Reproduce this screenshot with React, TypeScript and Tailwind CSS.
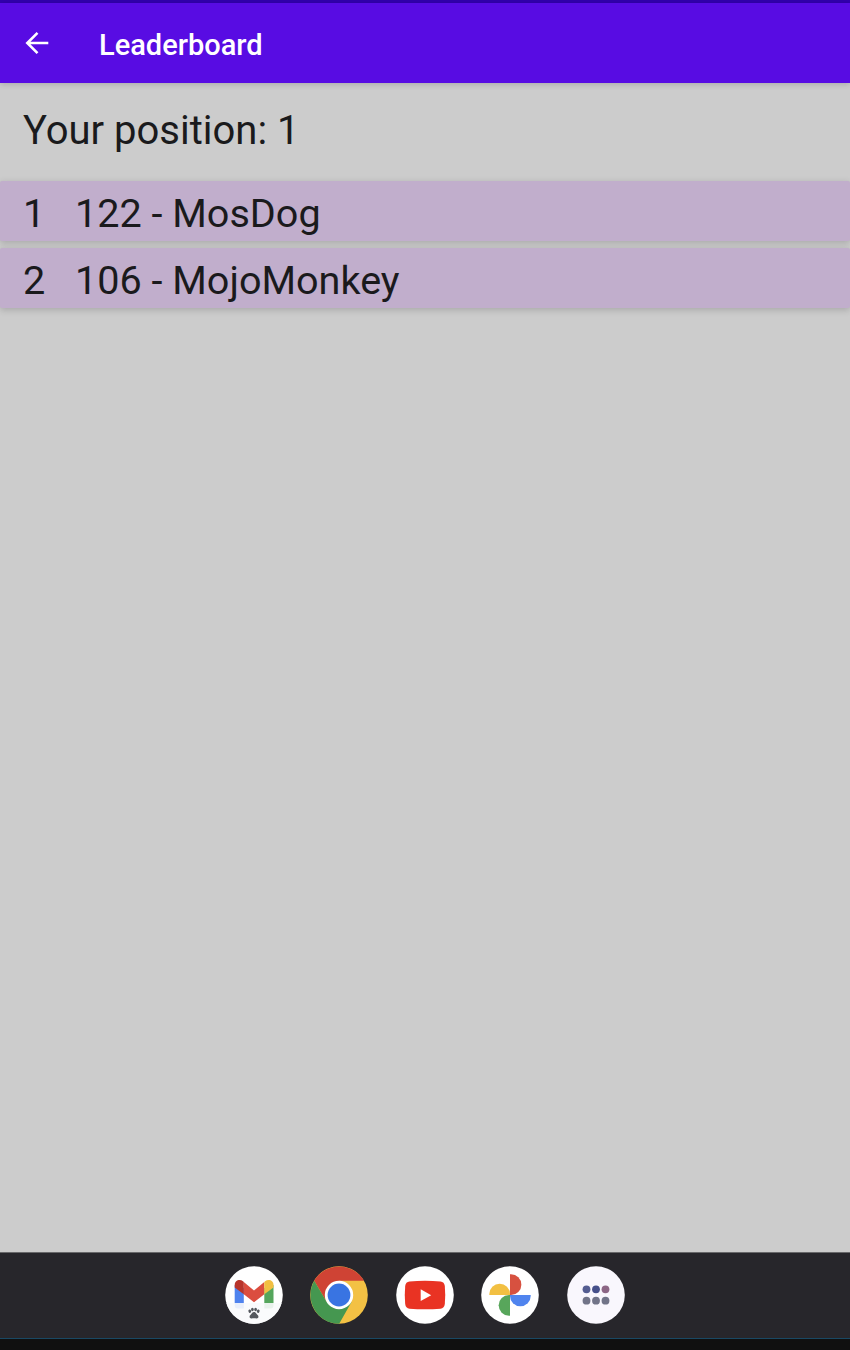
import React from "react";

const players = [
  { rank: 1, score: 122, name: "MosDog" },
  { rank: 2, score: 106, name: "MojoMonkey" },
];

function BackArrow() {
  return (
    <svg className="h-6 w-6" viewBox="0 0 24 24" fill="none" stroke="#fff" strokeWidth="2.6">
      <path d="M23.3 12H2.5M12.5 1.8L2.3 12L12.5 22.2" />
    </svg>
  );
}

function DockIcon({ children, background = "#fff" }: { children: React.ReactNode; background?: string }) {
  return (
    <svg className="h-[58px] w-[58px] shrink-0" viewBox="-29 -29 58 58">
      <circle r="28.8" fill={background} />
      {children}
    </svg>
  );
}

function GmailIcon() {
  return (
    <DockIcon>
      <path d="M-19.3 -10V10.5Q-19.3 13.5 -16.3 13.5H-10.2V-7Z" fill="#4f83ee" />
      <path d="M19.5 -10V10.5Q19.5 13.5 16.5 13.5H10.3V-7Z" fill="#55a65c" />
      <path d="M-10.2 -13L0 -4.5L10.3 -13V-.8L0 7.3L-10.2 -.8Z" fill="#db4d3f" />
      <path d="M-19.3 -7.5V-10C-19.3 -15 -14 -16.3 -11 -13.7L-10.2 -13V-.8Z" fill="#b8342b" />
      <path d="M19.5 -7.5V-10C19.5 -15 14.2 -16.3 11.1 -13.7L10.3 -13V-.8Z" fill="#f2bf42" />
      <path d="M-27.7 8H27.7A28.8 28.8 0 0 1 -27.7 8Z" fill="#fafbfc" fillOpacity=".9" />
      <g fill="#55595e">
        <ellipse cx="-4.2" cy="16.2" rx="1.35" ry="1.7" transform="rotate(-20 -4.2 16.2)" />
        <ellipse cx="-1.6" cy="14.5" rx="1.35" ry="1.8" />
        <ellipse cx="1.6" cy="14.5" rx="1.35" ry="1.8" />
        <ellipse cx="4.2" cy="16.2" rx="1.35" ry="1.7" transform="rotate(20 4.2 16.2)" />
        <path d="M0 17.1C1.7 17.1 2.2 19 3.6 20C5.3 21.5 4.2 23.6 2.5 23.4C.8 23.2 -.8 23.2 -2.5 23.4C-4.2 23.6 -5.3 21.5 -3.6 20C-2.2 19 -1.7 17.1 0 17.1Z" />
      </g>
    </DockIcon>
  );
}

function ChromeIcon() {
  return (
    <DockIcon background="#f3c144">
      <path d="M-24.8 -14.2A28.8 28.8 0 0 1 25 -14.2H0L-12.2 7Z" fill="#cf4334" />
      <path d="M-24.8 -14.2A28.8 28.8 0 0 0 .2 28.8L12.5 7H-12.2Z" fill="#459750" />
      <circle r="14.2" fill="#fff" />
      <circle r="11.4" fill="#3974e2" />
    </DockIcon>
  );
}

function YouTubeIcon() {
  return (
    <DockIcon>
      <path d="M-15.5 -13.6Q0 -14.7 15.5 -13.6Q19.3 -13.2 19.8 -9Q20.7 0 19.8 9Q19.3 13.3 15.5 13.7Q0 14.8 -15.5 13.7Q-19.3 13.3 -19.8 9Q-20.7 0 -19.8 -9Q-19.3 -13.2 -15.5 -13.6Z" fill="#e93323" />
      <path d="M-4.3 -5.8V6.1L6.2 .15Z" fill="#fff" />
    </DockIcon>
  );
}

function PhotosIcon() {
  return (
    <DockIcon>
      <path d="M0 0V-20.7H1A10.35 10.35 0 0 1 1 0Z" fill="#d75140" />
      <path d="M0 0H20.7V1A10.35 10.35 0 0 1 0 1Z" fill="#5084ee" />
      <path d="M0 0V20.7H-1A10.35 10.35 0 0 1 -1 0Z" fill="#58a65b" />
      <path d="M0 0H-20.7V-1A10.35 10.35 0 0 1 0 -1Z" fill="#f2c043" />
    </DockIcon>
  );
}

function AppsIcon() {
  return (
    <DockIcon background="#f9f7fd">
      <circle cx="-9.5" cy="-5.7" r="3.9" fill="#545d91" />
      <circle cx="0" cy="-5.7" r="3.9" fill="#46508a" />
      <circle cx="9.5" cy="-5.7" r="3.9" fill="#8c6685" />
      <circle cx="-9.5" cy="5.7" r="3.9" fill="#717488" />
      <circle cx="0" cy="5.7" r="3.9" fill="#717488" />
      <circle cx="9.5" cy="5.7" r="3.9" fill="#717488" />
    </DockIcon>
  );
}

export default function App() {
  return (
    <div className="flex h-[1350px] w-[850px] flex-col overflow-hidden bg-[#cccccc] font-['Roboto',sans-serif] text-[#1a1a1c]">
      <div className="h-[3px] shrink-0 bg-[#3200af]" />
      <header className="z-10 flex h-20 shrink-0 items-center bg-[#580ce3] pl-[25px] text-white shadow-[0_1px_6px_rgba(0,0,0,0.18)]">
        <BackArrow />
        <h1 className="ml-[50px] pt-1 text-[29px] leading-8 font-medium">Leaderboard</h1>
      </header>

      <main className="flex-1">
        <p className="h-[98px] pt-6 pl-[23px] text-[40px] leading-[48px]">Your position: 1</p>
        <ul className="flex flex-col gap-[7px]">
          {players.map((player) => (
            <li
              key={player.rank}
              className="flex h-[60px] items-center rounded-[2px] bg-[#c1aecc] pt-[5px] pl-[23px] text-[39.6px] leading-[47px] shadow-[0_2px_7px_rgba(0,0,0,0.18)]"
            >
              <span className="w-[52px]">{player.rank}</span>
              <span>{player.score} - {player.name}</span>
            </li>
          ))}
        </ul>
      </main>

      <nav className="flex h-[86px] shrink-0 items-center justify-center gap-[27.5px] border-t border-[#68686a] bg-[#27262b] pr-[0.8px] pb-px">
        <GmailIcon />
        <ChromeIcon />
        <YouTubeIcon />
        <PhotosIcon />
        <AppsIcon />
      </nav>
      <div className="h-3 shrink-0 border-t border-[#194863] bg-[#101010]" />
    </div>
  );
}
